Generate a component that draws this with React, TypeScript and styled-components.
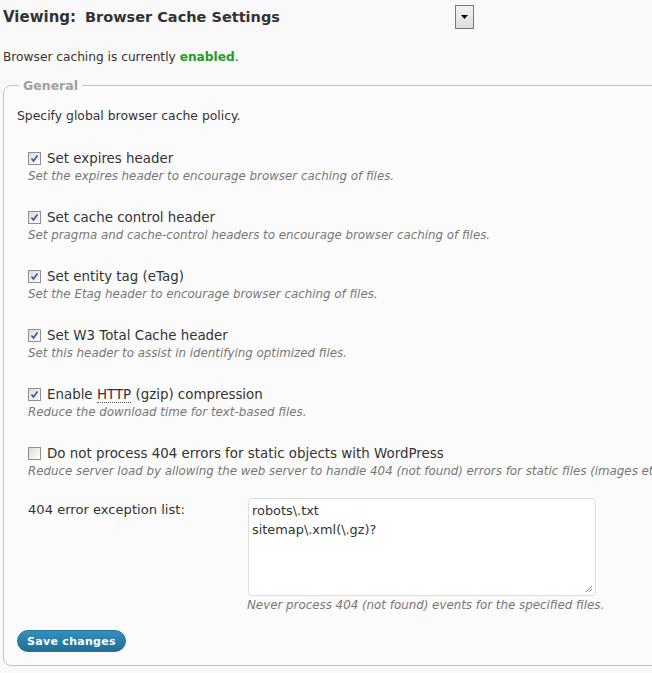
import React from "react";
import styled, { createGlobalStyle } from "styled-components";

const Global = createGlobalStyle`
  html, body { margin: 0; padding: 0; background: #f9f9f9; overflow: hidden; }
  body { font-family: "DejaVu Sans", Verdana, sans-serif; color: #333; }
`;

const Page = styled.div`
  width: 652px;
  height: 673px;
  padding-left: 3px;
  box-sizing: border-box;
  overflow: hidden;
`;

const Header = styled.div`
  display: flex;
  align-items: center;
  height: 34px;
`;

const HeaderLabel = styled.span`
  font-size: 15px;
  font-weight: bold;
  color: #333;
  width: 82px;
`;

const SelectBox = styled.div`
  display: flex;
  align-items: center;
  justify-content: space-between;
  width: 389px;
  font-size: 14.5px;
  font-weight: bold;
  color: #333;
`;

const SelectArrow = styled.div`
  width: 17px;
  height: 22px;
  border: 1px solid #777;
  background: linear-gradient(#f4f4f4, #dcdcdc);
  display: flex;
  align-items: center;
  justify-content: center;
`;

const Status = styled.p`
  margin: 14px 0 0;
  font-size: 12.2px;
  line-height: 18px;
`;

const Enabled = styled.strong`
  color: #1f9d1f;
`;

const Fieldset = styled.fieldset`
  margin: 12px 0 0 0;
  width: 720px;
  border: 1px solid #c4c4c4;
  border-radius: 8px;
  background: #fbfbfb;
  padding: 15px 12px 13px 13px;
  box-sizing: border-box;
`;

const Legend = styled.legend`
  font-size: 12.5px;
  font-weight: bold;
  color: #a0a0a0;
  padding: 0 4px;
  margin-left: 2px;
`;

const Intro = styled.p`
  margin: 0 0 26px;
  font-size: 12.4px;
  line-height: 16px;
`;

const Item = styled.div`
  margin-left: 11px;
  margin-bottom: 23px;
`;

const LabelRow = styled.label`
  display: flex;
  align-items: center;
  gap: 6px;
  font-size: 13.4px;
  line-height: 17px;
  color: #333;
`;

const Box = styled.span<{ $checked: boolean }>`
  width: 11px;
  height: 11px;
  border: 1px solid #8e8f8f;
  background: linear-gradient(135deg, #dcdcd6, #fdfdfd);
  display: inline-flex;
  align-items: center;
  justify-content: center;
  flex: none;
`;

const Abbr = styled.span`
  border-bottom: 1px dotted #555;
`;

const Desc = styled.div<{ $indent?: number }>`
  font-size: 11.85px;
  font-style: italic;
  color: #777;
  line-height: 19px;
  white-space: nowrap;
  margin-left: ${(p) => p.$indent ?? 0}px;
`;

const FieldRow = styled.div`
  display: flex;
  margin-left: 11px;
  margin-top: -6px;
`;

const FieldLabel = styled.div`
  width: 220px;
  font-size: 13.1px;
  line-height: 17px;
  padding-top: 3px;
`;

const TextArea = styled.div`
  width: 348px;
  height: 98px;
  box-sizing: border-box;
  border: 1px solid #dfdfdf;
  border-radius: 4px;
  background: #fff;
  padding: 2px 3px;
  font-size: 12.9px;
  line-height: 19px;
  color: #333;
  position: relative;
  white-space: pre;
`;

const Grip = styled.svg`
  position: absolute;
  right: 2px;
  bottom: 2px;
`;

const SaveButton = styled.button`
  margin-top: 15px;
  height: 22px;
  padding: 0 9px;
  border: 1px solid #21759b;
  border-radius: 11px;
  background: linear-gradient(#3590bd, #1f6d96);
  color: #fff;
  font-family: "DejaVu Sans", Verdana, sans-serif;
  font-size: 11px;
  font-weight: bold;
  letter-spacing: 0.3px;
`;

const Check = ({ checked }: { checked: boolean }) => (
  <Box $checked={checked}>
    {checked && (
      <svg width="9" height="9" viewBox="0 0 9 9">
        <path d="M1.5 4.5 L3.5 7 L7.5 1.5" stroke="#3a4fa0" strokeWidth="1.6" fill="none" />
      </svg>
    )}
  </Box>
);

const items: { label: React.ReactNode; desc: string; checked: boolean }[] = [
  { label: "Set expires header", desc: "Set the expires header to encourage browser caching of files.", checked: true },
  { label: "Set cache control header", desc: "Set pragma and cache-control headers to encourage browser caching of files.", checked: true },
  { label: "Set entity tag (eTag)", desc: "Set the Etag header to encourage browser caching of files.", checked: true },
  { label: "Set W3 Total Cache header", desc: "Set this header to assist in identifying optimized files.", checked: true },
  {
    label: (
      <>
        Enable <Abbr>HTTP</Abbr> (gzip) compression
      </>
    ),
    desc: "Reduce the download time for text-based files.",
    checked: true,
  },
  {
    label: "Do not process 404 errors for static objects with WordPress",
    desc: "Reduce server load by allowing the web server to handle 404 (not found) errors for static files (images etc).",
    checked: false,
  },
];

export default function App() {
  return (
    <Page>
      <Global />
      <Header>
        <HeaderLabel>Viewing:</HeaderLabel>
        <SelectBox>
          <span>Browser Cache Settings</span>
          <SelectArrow>
            <svg width="7" height="4" viewBox="0 0 7 4">
              <path d="M0 0 H7 L3.5 4 Z" fill="#000" />
            </svg>
          </SelectArrow>
        </SelectBox>
      </Header>
      <Status>
        Browser caching is currently <Enabled>enabled</Enabled>.
      </Status>
      <Fieldset>
        <Legend>General</Legend>
        <Intro>Specify global browser cache policy.</Intro>
        {items.map((it, i) => (
          <Item key={i}>
            <LabelRow>
              <Check checked={it.checked} />
              <span>{it.label}</span>
            </LabelRow>
            <Desc>{it.desc}</Desc>
          </Item>
        ))}
        <FieldRow>
          <FieldLabel>404 error exception list:</FieldLabel>
          <div>
            <TextArea>
              {"robots\\.txt\nsitemap\\.xml(\\.gz)?"}
              <Grip width="8" height="8" viewBox="0 0 8 8">
                <path d="M7 1 L1 7 M7 4 L4 7" stroke="#888" strokeWidth="1" />
              </Grip>
            </TextArea>
            <Desc $indent={-1}>Never process 404 (not found) events for the specified files.</Desc>
          </div>
        </FieldRow>
        <SaveButton>Save changes</SaveButton>
      </Fieldset>
    </Page>
  );
}
